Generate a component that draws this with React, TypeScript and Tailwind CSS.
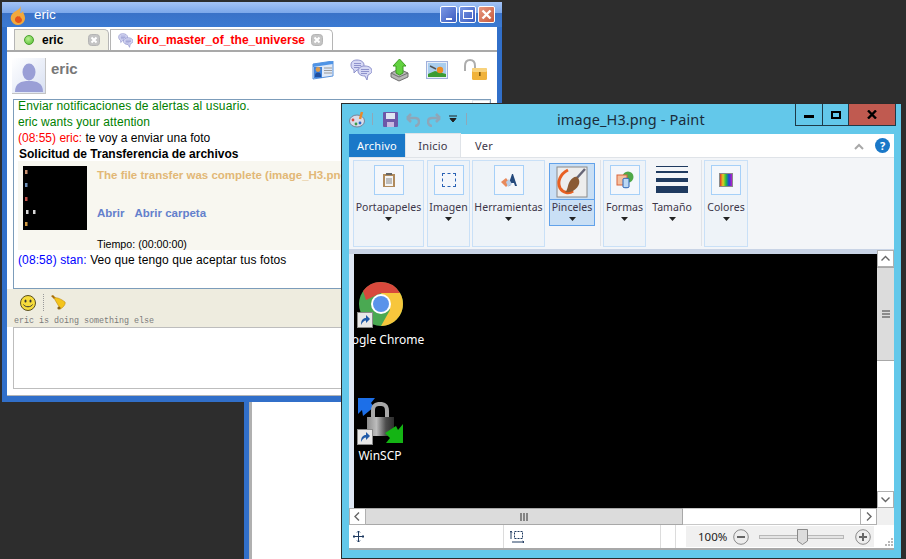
import type { ReactNode } from "react";

const sans = "font-['Liberation_Sans',Arial,sans-serif]";
const ui = "font-['Noto_Sans',sans-serif]";

function Flame() {
  return (
    <svg width="16" height="20" viewBox="0 0 16 20">
      <path d="M10 0C11 3 9 4 6 6C2 8 0 11 1 15C2 18 5 20 8 20C12 20 15 17 15 13C15 10 13 8 13 6C12 8 11 8 10 8C11 5 11 2 10 0Z" fill="#f2a93c" />
      <path d="M8 11C5 12 4 15 6 17C8 19 12 18 12 15C12 13 10 13 10 11C9 12 9 12 8 11Z" fill="#e2551c" />
    </svg>
  );
}

function TabClose() {
  return (
    <svg width="12" height="12" viewBox="0 0 12 12">
      <rect x="0.5" y="0.5" width="11" height="11" rx="3" fill="#c4c4c4" stroke="#b4b4b4" />
      <path d="M3.5 3.5L8.5 8.5M8.5 3.5L3.5 8.5" stroke="#fff" strokeWidth="2" />
    </svg>
  );
}

function Bubbles({ size = 22 }: { size?: number }) {
  return (
    <svg width={size} height={size} viewBox="0 0 22 22">
      <path d="M7 1C3 1 1 3 1 6C1 8 2 10 4 11L4 14L7 11C11 11 14 9 14 6C14 3 11 1 7 1Z" fill="#d6d8f4" stroke="#8e92cc" />
      <path d="M4 4.5H11M4 6.5H11M4 8.5H9" stroke="#8e92cc" />
      <path d="M15 7C11 7 8 9 8 12C8 15 11 17 15 17L17 21L18 16C20 15 22 14 22 12C22 9 19 7 15 7Z" fill="#d6d8f4" stroke="#8e92cc" />
      <path d="M11 10.5H19M11 12.5H19M11 14.5H17" stroke="#8e92cc" />
    </svg>
  );
}

function Card() {
  return (
    <svg width="22" height="19" viewBox="0 0 22 19">
      <path d="M1 3L21 0V15L1 18Z" fill="#dfe9f8" stroke="#5a93dc" />
      <path d="M1 3L21 0V3L1 6Z" fill="#4f94e6" />
      <rect x="2" y="6" width="8" height="11" fill="#3f83dc" />
      <circle cx="6" cy="8.5" r="2.4" fill="#d9994c" />
      <path d="M3 15C3 12 4.5 11.5 6 11.5C7.5 11.5 9 12 9 15V16H3Z" fill="#1f4fa0" />
      <path d="M12 7H20M12 9.5H20M12 12H20" stroke="#9a9a9a" />
    </svg>
  );
}

function Upload() {
  return (
    <svg width="19" height="23" viewBox="0 0 19 23">
      <path d="M1 14L9 10L18 14V18L9 22L1 18Z" fill="#b6b6b6" stroke="#6f6f6f" />
      <path d="M1 14L9 18L18 14" fill="none" stroke="#6f6f6f" />
      <path d="M9.5 0L16 7H13V14L9.5 16L6 14V7H3Z" fill="#62d23f" stroke="#3c9c22" />
    </svg>
  );
}

function Picture() {
  return (
    <svg width="22" height="18" viewBox="0 0 22 18">
      <rect x="0.5" y="0.5" width="21" height="17" fill="#e8eef8" stroke="#9fb0dc" />
      <rect x="2" y="2" width="18" height="14" fill="#a9cdee" />
      <path d="M2 13L9 10L20 13V16H2Z" fill="#3b9c33" />
      <circle cx="14" cy="9" r="3.2" fill="#ee8b22" />
      <path d="M4 5L10 8" stroke="#555" strokeWidth="1.5" />
    </svg>
  );
}

function OpenLock() {
  return (
    <svg width="24" height="22" viewBox="0 0 24 22">
      <path d="M2 12V7C2 3 4 1 7 1C10 1 12 3 12 7V9" fill="none" stroke="#adadad" strokeWidth="2" />
      <rect x="9" y="9" width="15" height="12" rx="1.5" fill="#f0b23a" />
      <rect x="9" y="9" width="15" height="4" rx="1.5" fill="#f8d27c" />
      <rect x="16" y="13" width="1.6" height="4" fill="#805a10" />
    </svg>
  );
}

function Avatar() {
  return (
    <svg width="33" height="35" viewBox="0 0 33 35">
      <defs>
        <linearGradient id="av" x1="0" y1="0" x2="1" y2="1">
          <stop offset="0" stopColor="#ffffff" />
          <stop offset="1" stopColor="#d8e0f2" />
        </linearGradient>
      </defs>
      <rect width="33" height="35" fill="url(#av)" />
      <ellipse cx="17" cy="14" rx="6.5" ry="8.5" fill="#9a9fd6" />
      <path d="M3 34C3 25 9 23 17 23C25 23 31 25 31 34Z" fill="#9a9fd6" />
    </svg>
  );
}

function Smile() {
  return (
    <svg width="16" height="16" viewBox="0 0 16 16">
      <circle cx="8" cy="8" r="7.5" fill="#f6dc3c" stroke="#5a5020" />
      <ellipse cx="5.5" cy="6" rx="1" ry="1.6" fill="#333" />
      <ellipse cx="10.5" cy="6" rx="1" ry="1.6" fill="#333" />
      <path d="M3.5 9.5C5 12.5 11 12.5 12.5 9.5" fill="none" stroke="#333" />
    </svg>
  );
}

function Bell() {
  return (
    <svg width="15" height="15" viewBox="0 0 15 15">
      <path d="M0 1L2 0L5 3L3 4Z" fill="#a8700c" />
      <path d="M3 3C6 2 10 4 14 7C15 9 12 13 9 14C8 11 5 7 3 3Z" fill="#f4c41c" stroke="#c08c10" strokeWidth="0.6" />
      <circle cx="8" cy="13" r="1.6" fill="#8a6414" />
    </svg>
  );
}

function Thumbnail() {
  const dots = [
    [1, 4, "#c89070"],
    [1, 17, "#6f90b8"],
    [1, 31, "#c05048"],
    [2, 44, "#d8d8d8"],
    [9, 44, "#d8d8d8"],
    [1, 56, "#d09840"],
  ] as const;
  return (
    <svg width="64" height="64" viewBox="0 0 64 64" className="shrink-0">
      <rect width="64" height="64" fill="#000" />
      {dots.map(([x, y, c], i) => (
        <rect key={i} x={x + 1} y={y} width="2.5" height="4" fill={c} />
      ))}
    </svg>
  );
}

function ChatLine({ time, name, color, text, className = "" }: { time: string; name: string; color: string; text: string; className?: string }) {
  return (
    <div className={`h-4 ${className}`}>
      <span style={{ color }}>
        ({time}) {name}:
      </span>{" "}
      <span className="text-black">{text}</span>
    </div>
  );
}

function ChatWindow() {
  return (
    <div className={`absolute left-[2px] top-[2px] flex h-[400px] w-[500px] flex-col bg-[#316fc9] px-[5px] pb-[6px] ${sans}`}>
      {/* title bar */}
      <div className="-mx-[5px] flex h-[25px] shrink-0 items-center bg-[linear-gradient(#a3c3f5_0%,#7ca7ea_44%,#3a72c8_46%,#3b7ad2_100%)] pl-[8px] pr-[7px]">
        <Flame />
        <span className="ml-[8px] pt-[1px] text-[13.5px] text-white">eric</span>
        <div className="ml-auto flex gap-[2px]">
          <div className="flex h-[17px] w-[17px] items-end justify-center rounded-[2px] border border-white bg-[linear-gradient(135deg,#7a98e4,#3c5cc0)] pb-[2px]">
            <div className="h-[2px] w-[6px] bg-white" />
          </div>
          <div className="flex h-[17px] w-[17px] items-center justify-center rounded-[2px] border border-white bg-[linear-gradient(135deg,#7a98e4,#3c5cc0)]">
            <div className="h-[9px] w-[10px] border border-t-2 border-white" />
          </div>
          <div className="flex h-[17px] w-[17px] items-center justify-center rounded-[2px] border border-white bg-[linear-gradient(135deg,#e89880,#c85a3e)]">
            <svg width="11" height="11" viewBox="0 0 11 11">
              <path d="M1.5 1.5L9.5 9.5M9.5 1.5L1.5 9.5" stroke="#fff" strokeWidth="2.4" />
            </svg>
          </div>
        </div>
      </div>

      <div className="flex min-h-0 flex-1 flex-col border-b border-[#b5b5b5] bg-white">
        {/* tabs */}
        <div className="flex h-[25px] shrink-0 items-end gap-px border-b-2 border-[#a9a9a9] pl-[7px] pt-[3px]">
          <div className="flex h-[21px] w-[95px] items-center rounded-tr-[5px] border border-b-0 border-[#b5b5b5] bg-[#f0efe3] pl-[9px] pr-[8px]">
            <span className="h-[10px] w-[10px] rounded-full border border-[#4aa02c] bg-[radial-gradient(circle_at_40%_35%,#b8f090,#52bc30)]" />
            <span className="ml-[8px] text-[12px] font-bold leading-none text-black">eric</span>
            <span className="ml-auto flex">
              <TabClose />
            </span>
          </div>
          <div className="flex h-[21px] w-[223px] items-center rounded-tr-[5px] border border-b-0 border-[#b5b5b5] bg-white pl-[7px] pr-[9px]">
            <Bubbles size={15} />
            <span className="ml-[4px] text-[12px] font-bold leading-none tracking-[0.05px] text-[#ff0000]">kiro_master_of_the_universe</span>
            <span className="ml-auto flex">
              <TabClose />
            </span>
          </div>
        </div>

        {/* contact header */}
        <div className="flex h-[47px] shrink-0 pl-[5px] pt-[6px]">
          <div className="h-[36px] w-[34px] border-b border-r border-[#c4c4c4]">
            <Avatar />
          </div>
          <span className="ml-[5px] w-[27px] text-[15px] font-bold leading-[22px] text-[#777777]">eric</span>
          <div className="ml-[234px] flex h-[24px] items-center gap-[16px]">
            <Card />
            <Bubbles />
            <span className="ml-[2px] flex">
              <Upload />
            </span>
            <span className="ml-[1px] flex">
              <Picture />
            </span>
            <span className="ml-[-1px] flex">
              <OpenLock />
            </span>
          </div>
        </div>

        {/* conversation */}
        <div className="relative mx-[6px] h-[190px] shrink-0 border border-[#7c9cba] pl-[4px] text-[12px] leading-[16px]">
          <div className="absolute right-0 top-0 h-[18px] w-[18px] border border-[#dfe6ee] bg-white" />
          <div className="-mt-[2px] h-4 tracking-[0.16px] text-[#008000]">Enviar notificaciones de alertas al usuario.</div>
          <div className="h-4 tracking-[0.08px] text-[#008000]">eric wants your attention</div>
          <ChatLine time="08:55" name="eric" color="#ff0000" text="te voy a enviar una foto" />
          <div className="h-4 pl-px font-bold text-black">Solicitud de Transferencia de archivos</div>
          <div className="-mt-[1px] flex h-[89px] overflow-hidden whitespace-nowrap bg-[#f8f7f0] pl-[5px] pt-[5px] text-[11.5px]">
            <Thumbnail />
            <div className="ml-[10px] flex flex-col">
              <span className="mt-[1px] font-bold text-[#e2b876]">The file transfer was complete (image_H3.png)</span>
              <span className="mt-[22px] flex gap-[10px] font-bold text-[#6480cc]">
                <span>Abrir</span>
                <span>Abrir carpeta</span>
              </span>
              <span className="mt-[15px] text-[10.7px] text-black">Tiempo: (00:00:00)</span>
            </div>
          </div>
          <ChatLine time="08:58" name="stan" color="#0000ff" text="Veo que tengo que aceptar tus fotos" className="mt-[2px] tracking-[0.1px]" />
        </div>

        {/* toolbar */}
        <div className="flex h-[38px] shrink-0 flex-col bg-[#eeecdf] pl-[7px]">
          <div className="-ml-[7px] flex h-[27px] items-center pl-[13px]">
            <Smile />
            <div className="ml-[7px] h-[17px] border-l border-dotted border-[#999]" />
            <span className="ml-[7px] flex">
              <Bell />
            </span>
          </div>
          <div className="font-['Liberation_Mono',monospace] text-[8.33px] leading-[10px] text-[#7a7a7a]">
            eric is doing something else
          </div>
        </div>

        {/* input */}
        <div className="mx-[6px] h-[62px] shrink-0 border border-[#bdbdbd] bg-white" />
      </div>
    </div>
  );
}

function Drop() {
  return (
    <svg width="7" height="5" viewBox="0 0 7 5">
      <path d="M0 0H7L3.5 4Z" fill="#222" />
    </svg>
  );
}

function RibbonLabel({ children }: { children: ReactNode }) {
  return <span className="text-[10.5px] leading-[14px] tracking-[0.05px] text-[#3c3648]">{children}</span>;
}

function RibbonGroup({
  label,
  width,
  children,
  className = "",
}: {
  label: string;
  width: number;
  children: ReactNode;
  className?: string;
}) {
  return (
    <div
      style={{ width }}
      className={`flex h-[87px] shrink-0 flex-col items-center border border-[#c9e0f7] bg-[#eef3f8] pt-[4px] ${className}`}
    >
      <div className="mb-[5px] flex h-[30px] w-[30px] items-center justify-center border border-[#a6d0f8] bg-[#f4f7fb]">{children}</div>
      <RibbonLabel>{label}</RibbonLabel>
      <span className="mt-[3px] flex">
        <Drop />
      </span>
    </div>
  );
}

function BrushGroup() {
  return (
    <div className="mt-[3px] flex h-[63px] w-[46px] shrink-0 flex-col items-center self-start border border-[#62a2ea] bg-[#c9dff5]">
      <div className="flex h-[36px] w-full shrink-0 items-center justify-center border-b border-[#62a2ea]">
        <svg width="32" height="32" viewBox="0 0 32 32">
          <rect x="1" y="1" width="30" height="30" fill="#ededed" stroke="#8a8a8a" />
          <path d="M12 4C4 8 1 16 4 22C7 27 13 28 17 25" fill="none" stroke="#e85f22" strokeWidth="3" />
          <path d="M29 3L20 13" stroke="#667" strokeWidth="2.5" />
          <path d="M21 11C25 14 24 21 17 25C13 27 9 26 9 26C12 24 11 20 14 15C16 12 19 10 21 11Z" fill="#8a5a34" />
        </svg>
      </div>
      <RibbonLabel>Pinceles</RibbonLabel>
      <span className="mt-[3px] flex">
        <Drop />
      </span>
    </div>
  );
}

function ArrowBadge() {
  return (
    <svg width="16" height="16" viewBox="0 0 16 16" className="absolute bottom-0 left-0">
      <rect x="0.5" y="0.5" width="15" height="15" fill="#e8e8e8" stroke="#8a8a8a" />
      <path d="M4 13C4 8 6 6 9 6V3L13 7L9 11V8.5C7 8.5 5.5 10 4 13Z" fill="#1f5aa8" />
    </svg>
  );
}

function ChromeIcon() {
  return (
    <svg width="44" height="44" viewBox="0 0 44 44" className="ml-[2px]">
      <circle cx="22" cy="22" r="22" fill="#4aa952" />
      <path d="M22 0A22 22 0 0 1 41 11H22L7 18L4 9A22 22 0 0 1 22 0Z" fill="#d8493c" />
      <path d="M41 11A22 22 0 0 1 22 44L31 28L22 11Z" fill="#f7c63c" />
      <circle cx="22" cy="22" r="10" fill="#fff" />
      <circle cx="22" cy="22" r="8" fill="#5a93ea" />
    </svg>
  );
}

function WinScpIcon() {
  return (
    <svg width="46" height="46" viewBox="0 0 46 46" className="ml-px">
      <defs>
        <linearGradient id="lockBody" x1="0" y1="0" x2="1" y2="0">
          <stop offset="0" stopColor="#8c8c8c" />
          <stop offset="0.35" stopColor="#bdbdbd" />
          <stop offset="0.7" stopColor="#4c4c4c" />
          <stop offset="1" stopColor="#2c2c2c" />
        </linearGradient>
      </defs>
      <path d="M0 1H17L13 6L16 10L5 19L4 13L0 17Z" fill="#1c6fe8" />
      <path d="M13 22V14C13 7 17 5 22 5C27 5 31 7 31 14V22H27V14C27 10 26 9 22 9C18 9 17 10 17 14V22Z" fill="#a8a8a8" />
      <rect x="9" y="20" width="27" height="19" fill="url(#lockBody)" />
      <path d="M45 27V46H28L32 41L27 36L38 29L40 33Z" fill="#14b414" />
    </svg>
  );
}

function DesktopIcon({ className, boxClass, labelClass, icon, label }: { className: string; boxClass: string; labelClass: string; icon: ReactNode; label: string }) {
  return (
    <div className={`absolute flex w-[46px] flex-col items-center ${className}`}>
      <div className={`relative w-[46px] ${boxClass}`}>
        {icon}
        <ArrowBadge />
      </div>
      <span className={`whitespace-nowrap text-[12px] leading-[16px] text-white ${labelClass} ${ui}`}>{label}</span>
    </div>
  );
}

function ScrollButton({ d, className = "" }: { d: string; className?: string }) {
  return (
    <div className={`flex h-[17px] w-[17px] shrink-0 items-center justify-center border border-[#b0b0b0] bg-white ${className}`}>
      <svg width="11" height="11" viewBox="0 0 11 11">
        <path d={d} fill="none" stroke="#666" strokeWidth="1.4" />
      </svg>
    </div>
  );
}

function PaintWindow() {
  return (
    <div className={`absolute left-[341px] top-[103px] flex h-[456px] w-[561px] flex-col border border-[#2b2b2b] bg-[#63c8ea] pb-[7px] pl-[7px] pr-[7px] ${ui}`}>
      {/* title bar */}
      <div className="relative flex h-[30px] shrink-0 items-center">
        <svg width="17" height="17" viewBox="0 0 17 17">
          <ellipse cx="8" cy="10" rx="7.5" ry="6" fill="#d8dcea" stroke="#7a8298" />
          <circle cx="4" cy="9" r="1.4" fill="#e0483c" />
          <circle cx="7" cy="13" r="1.4" fill="#3c9a48" />
          <circle cx="11" cy="12" r="1.4" fill="#2c68c8" />
          <path d="M13 1L11 8" stroke="#e88a2c" strokeWidth="2.5" />
        </svg>
        <div className="ml-[6px] h-[12px] border-l border-[#8fa8b8]" />
        <svg width="15" height="15" viewBox="0 0 15 15" className="ml-[10px]">
          <rect width="15" height="15" rx="1" fill="#6c58a8" />
          <rect x="3" y="1" width="9" height="6" fill="#dfe6f2" />
          <rect x="4" y="10" width="7" height="5" fill="#c8b8e0" />
        </svg>
        <svg width="15" height="15" viewBox="0 0 15 15" className="ml-[7px]">
          <path d="M2 6H10C13 6 14 8 14 10C14 12 12 14 10 14M2 6L6 2M2 6L6 10" fill="none" stroke="#8fa6b8" strokeWidth="2.5" />
        </svg>
        <svg width="15" height="15" viewBox="0 0 15 15" className="ml-[7px]">
          <path d="M13 6H5C2 6 1 8 1 10C1 12 3 14 5 14M13 6L9 2M13 6L9 10" fill="none" stroke="#8fa6b8" strokeWidth="2.5" />
        </svg>
        <svg width="8" height="8" viewBox="0 0 8 8" className="ml-[7px]">
          <path d="M0 1H8M1 3.5H7L4 7Z" stroke="#222" fill="#222" strokeWidth="1" />
        </svg>
        <div className="ml-[9px] h-[12px] border-l border-[#8fa8b8]" />
        <span className="ml-[90px] text-[14.5px] leading-none tracking-[0.1px] text-[#1b2c3a]">image_H3.png - Paint</span>
        {/* caption buttons */}
        <div className="absolute -right-[2px] top-0 flex h-[22px] border border-t-0 border-[#1e3a48]">
          <div className="flex w-[27px] items-center justify-center border-r border-[#1e3a48]">
            <div className="mt-[4px] h-[3px] w-[10px] bg-black" />
          </div>
          <div className="flex w-[26px] items-center justify-center border-r border-[#1e3a48]">
            <div className="h-[8px] w-[10px] border-2 border-black" />
          </div>
          <div className="flex w-[46px] items-center justify-center bg-[#c05a50]">
            <svg width="10" height="9" viewBox="0 0 10 9">
              <path d="M1 0.5L9 8.5M9 0.5L1 8.5" stroke="#000" strokeWidth="2.4" />
            </svg>
          </div>
        </div>
      </div>

      {/* ribbon tabs */}
      <div className="flex h-[24px] shrink-0 items-end border-b border-[#dfe3e8] bg-white">
        <div className="flex h-[23px] w-[56px] items-center justify-center self-start bg-[#1a78c8] pt-[1px] text-[11px] tracking-[0.2px] text-white">Archivo</div>
        <div className="flex h-[24px] w-[56px] items-center justify-center border-x border-t border-[#dfe3e8] bg-[#f3f5f8] pt-[2px] text-[11px] tracking-[0.2px] text-[#3c3648]">Inicio</div>
        <div className="flex h-[23px] w-[46px] items-center justify-center self-start pt-[2px] text-[11px] tracking-[0.3px] text-[#3c3648]">Ver</div>
        <svg width="10" height="7" viewBox="0 0 10 7" className="mb-[7px] ml-auto">
          <path d="M1 6L5 2L9 6" fill="none" stroke="#a8a8a8" strokeWidth="2" />
        </svg>
        <div className="mb-[4px] ml-[11px] mr-[4px] flex h-[15px] w-[15px] items-center justify-center rounded-full bg-[#1a78c8] text-[11px] font-bold leading-none text-white">?</div>
      </div>

      {/* ribbon */}
      <div className="flex h-[91px] shrink-0 items-start bg-[#f3f5f8] pl-[4px] pt-[2px]">
        <RibbonGroup label="Portapapeles" width={71}>
          <svg width="14" height="14" viewBox="0 0 14 14">
            <rect x="1" y="1" width="12" height="13" fill="#b08a5c" />
            <rect x="3" y="3" width="8" height="10" fill="#f4f4f4" />
            <path d="M4 6H10M4 8H10M4 10H10" stroke="#888" />
            <rect x="4" y="0" width="6" height="2" fill="#666" />
          </svg>
        </RibbonGroup>
        <RibbonGroup label="Imagen" width={43} className="ml-[3px]">
          <div className="h-[14px] w-[14px] border border-dashed border-[#2a62b4]" />
        </RibbonGroup>
        <RibbonGroup label="Herramientas" width={73} className="ml-[2px]">
          <svg width="16" height="15" viewBox="0 0 16 15">
            <path d="M7 13L11 1H12L16 13H14L13 10H10L9 13Z" fill="#24497c" />
            <path d="M0 9L5 5L9 10L5 14Z" fill="#e88a5c" />
            <path d="M5 9L8 6L11 11L7 14Z" fill="#b9cfe8" />
          </svg>
        </RibbonGroup>
        <div className="ml-[4px]">
          <BrushGroup />
        </div>
        <div className="ml-[5px] h-[86px] border-l border-[#e0e3e8]" />
        <RibbonGroup label="Formas" width={43} className="ml-[2px]">
          <svg width="18" height="18" viewBox="0 0 18 18">
            <circle cx="12" cy="6" r="5.5" fill="#4fa848" />
            <rect x="1" y="4" width="10" height="10" fill="#f4c0a0" stroke="#d8643c" />
            <path d="M7 8C7 7 13 7 13 8V16C13 17 7 17 7 16Z" fill="#bcd8f4" stroke="#2a62b4" />
          </svg>
        </RibbonGroup>
        <div className="ml-[6px] flex h-[87px] w-[40px] shrink-0 flex-col items-center pt-[6px]">
          <svg width="32" height="28" viewBox="0 0 32 28" className="mb-[6px]">
            <rect y="0" width="32" height="1" fill="#1f3a60" />
            <rect y="5" width="32" height="2" fill="#1f3a60" />
            <rect y="12" width="32" height="4" fill="#1f3a60" />
            <rect y="20" width="32" height="7" fill="#1f3a60" />
          </svg>
          <RibbonLabel>Tamaño</RibbonLabel>
          <span className="mt-[3px] flex">
            <Drop />
          </span>
        </div>
        <div className="ml-[9px] h-[86px] border-l border-[#e0e3e8]" />
        <RibbonGroup label="Colores" width={44} className="ml-[2px]">
          <div className="h-[14px] w-[14px] border border-[#8a8a8a] bg-[linear-gradient(90deg,#e03030,#e0d020,#20c040,#2040e0,#c020c0)]" />
        </RibbonGroup>
      </div>

      {/* canvas + scrollbars */}
      <div className="flex h-[259px] shrink-0 flex-col bg-[#dfe8f5]">
        <div className="h-[5px] bg-[#c9d4e6]" />
        <div className="flex min-h-0 flex-1">
          <div className="relative ml-[5px] flex-1 overflow-hidden bg-black">
            <DesktopIcon className="left-[3px] top-[28px]" boxClass="h-[46px]" labelClass="mt-[4px]" icon={<ChromeIcon />} label="Google Chrome" />
            <DesktopIcon className="left-[3px] top-[143px]" boxClass="h-[48px]" labelClass="mt-[3px]" icon={<WinScpIcon />} label="WinSCP" />
          </div>
          <div className="-mt-[4px] flex w-[17px] shrink-0 flex-col bg-white">
            <ScrollButton d="M1.5 7.5L5.5 3.5L9.5 7.5" />
            <div className="flex h-[94px] items-center justify-center border-y border-[#a8a8a8] bg-[#dcdcdc]">
              <svg width="8" height="8" viewBox="0 0 8 8">
                <path d="M0 1H8M0 4H8M0 7H8" stroke="#707070" strokeWidth="1.6" />
              </svg>
            </div>
            <div className="flex-1" />
            <ScrollButton d="M1.5 3.5L5.5 7.5L9.5 3.5" />
          </div>
        </div>
      </div>
      <div className="flex h-[17px] shrink-0 bg-white">
        <ScrollButton d="M7 1.5L3 5.5L7 9.5" />
        <div className="flex w-[317px] items-center justify-center border-y border-r border-[#a8a8a8] bg-[#dcdcdc]">
          <svg width="8" height="8" viewBox="0 0 8 8">
            <path d="M1 0V8M4 0V8M7 0V8" stroke="#707070" strokeWidth="1.6" />
          </svg>
        </div>
        <div className="flex-1 border-y border-[#c8c8c8]" />
        <ScrollButton d="M4 1.5L8 5.5L4 9.5" />
        <div className="w-[17px] bg-[#f0f0f0]" />
      </div>

      {/* status bar */}
      <div className="flex h-[25px] shrink-0 items-center border-b-2 border-[#a8a8a8] bg-white">
        <div className="flex h-full w-[155px] items-center border-r border-[#dcdcdc] pl-[4px]">
          <svg width="11" height="11" viewBox="0 0 11 11">
            <path d="M5.5 0V11M0 5.5H11M4 1.5L5.5 0L7 1.5M4 9.5L5.5 11L7 9.5M1.5 4L0 5.5L1.5 7M9.5 4L11 5.5L9.5 7" fill="none" stroke="#1f3a60" />
          </svg>
        </div>
        <div className="flex h-full w-[157px] items-center border-r border-[#dcdcdc] pl-[6px]">
          <svg width="14" height="13" viewBox="0 0 14 13">
            <path d="M1 9V1M0 2.5L1 1L2 2.5M2 12H14M12.5 11L14 12L12.5 13" fill="none" stroke="#1f3a60" />
            <rect x="4.5" y="1.5" width="8" height="7" fill="none" stroke="#1f3a60" strokeDasharray="2 1" />
          </svg>
        </div>
        <div className="h-full w-[15px] border-r border-[#dcdcdc]" />
        <div className="ml-[10px] flex h-[21px] w-[188px] items-center bg-[#f0f0f0]">
          <span className="ml-[12px] w-[28px] text-[11.5px] leading-none text-[#222]">100%</span>
          <svg width="16" height="16" viewBox="0 0 16 16" className="ml-[7px]">
            <circle cx="8" cy="8" r="7.3" fill="#ededed" stroke="#8a8a8a" />
            <path d="M4 8H12" stroke="#666" strokeWidth="2" />
          </svg>
          <div className="relative ml-[10px] flex h-[4px] w-[85px] items-center border border-[#b8b8b8] bg-[#e4e4e4]">
            <svg width="11" height="16" viewBox="0 0 11 16" className="absolute left-[37px] top-[-7px]">
              <path d="M0.5 0.5H10.5V12L5.5 15.5L0.5 12Z" fill="#dcdcdc" stroke="#8a8a8a" />
            </svg>
          </div>
          <svg width="16" height="16" viewBox="0 0 16 16" className="ml-[11px]">
            <circle cx="8" cy="8" r="7.3" fill="#ededed" stroke="#8a8a8a" />
            <path d="M4 8H12M8 4V12" stroke="#666" strokeWidth="2" />
          </svg>
        </div>
        <svg width="8" height="8" viewBox="0 0 8 8" className="ml-auto mr-[1px] mt-[10px]">
          <path d="M6 0H8V2H6ZM3 3H5V5H3ZM6 3H8V5H6ZM0 6H2V8H0ZM3 6H5V8H3ZM6 6H8V8H6Z" fill="#b8b8b8" />
        </svg>
      </div>
    </div>
  );
}

export default function App() {
  return (
    <div className="relative h-[559px] w-[906px] overflow-hidden bg-[#2d2d2d]">
      {/* window behind, mostly covered */}
      <div className="absolute left-[244px] top-[300px] h-[259px] w-[300px] border-l-[5px] border-[#316fc9] bg-white">
        <div className="h-full w-[3px] bg-[#b0b0b0]" />
      </div>
      <ChatWindow />
      <PaintWindow />
    </div>
  );
}
